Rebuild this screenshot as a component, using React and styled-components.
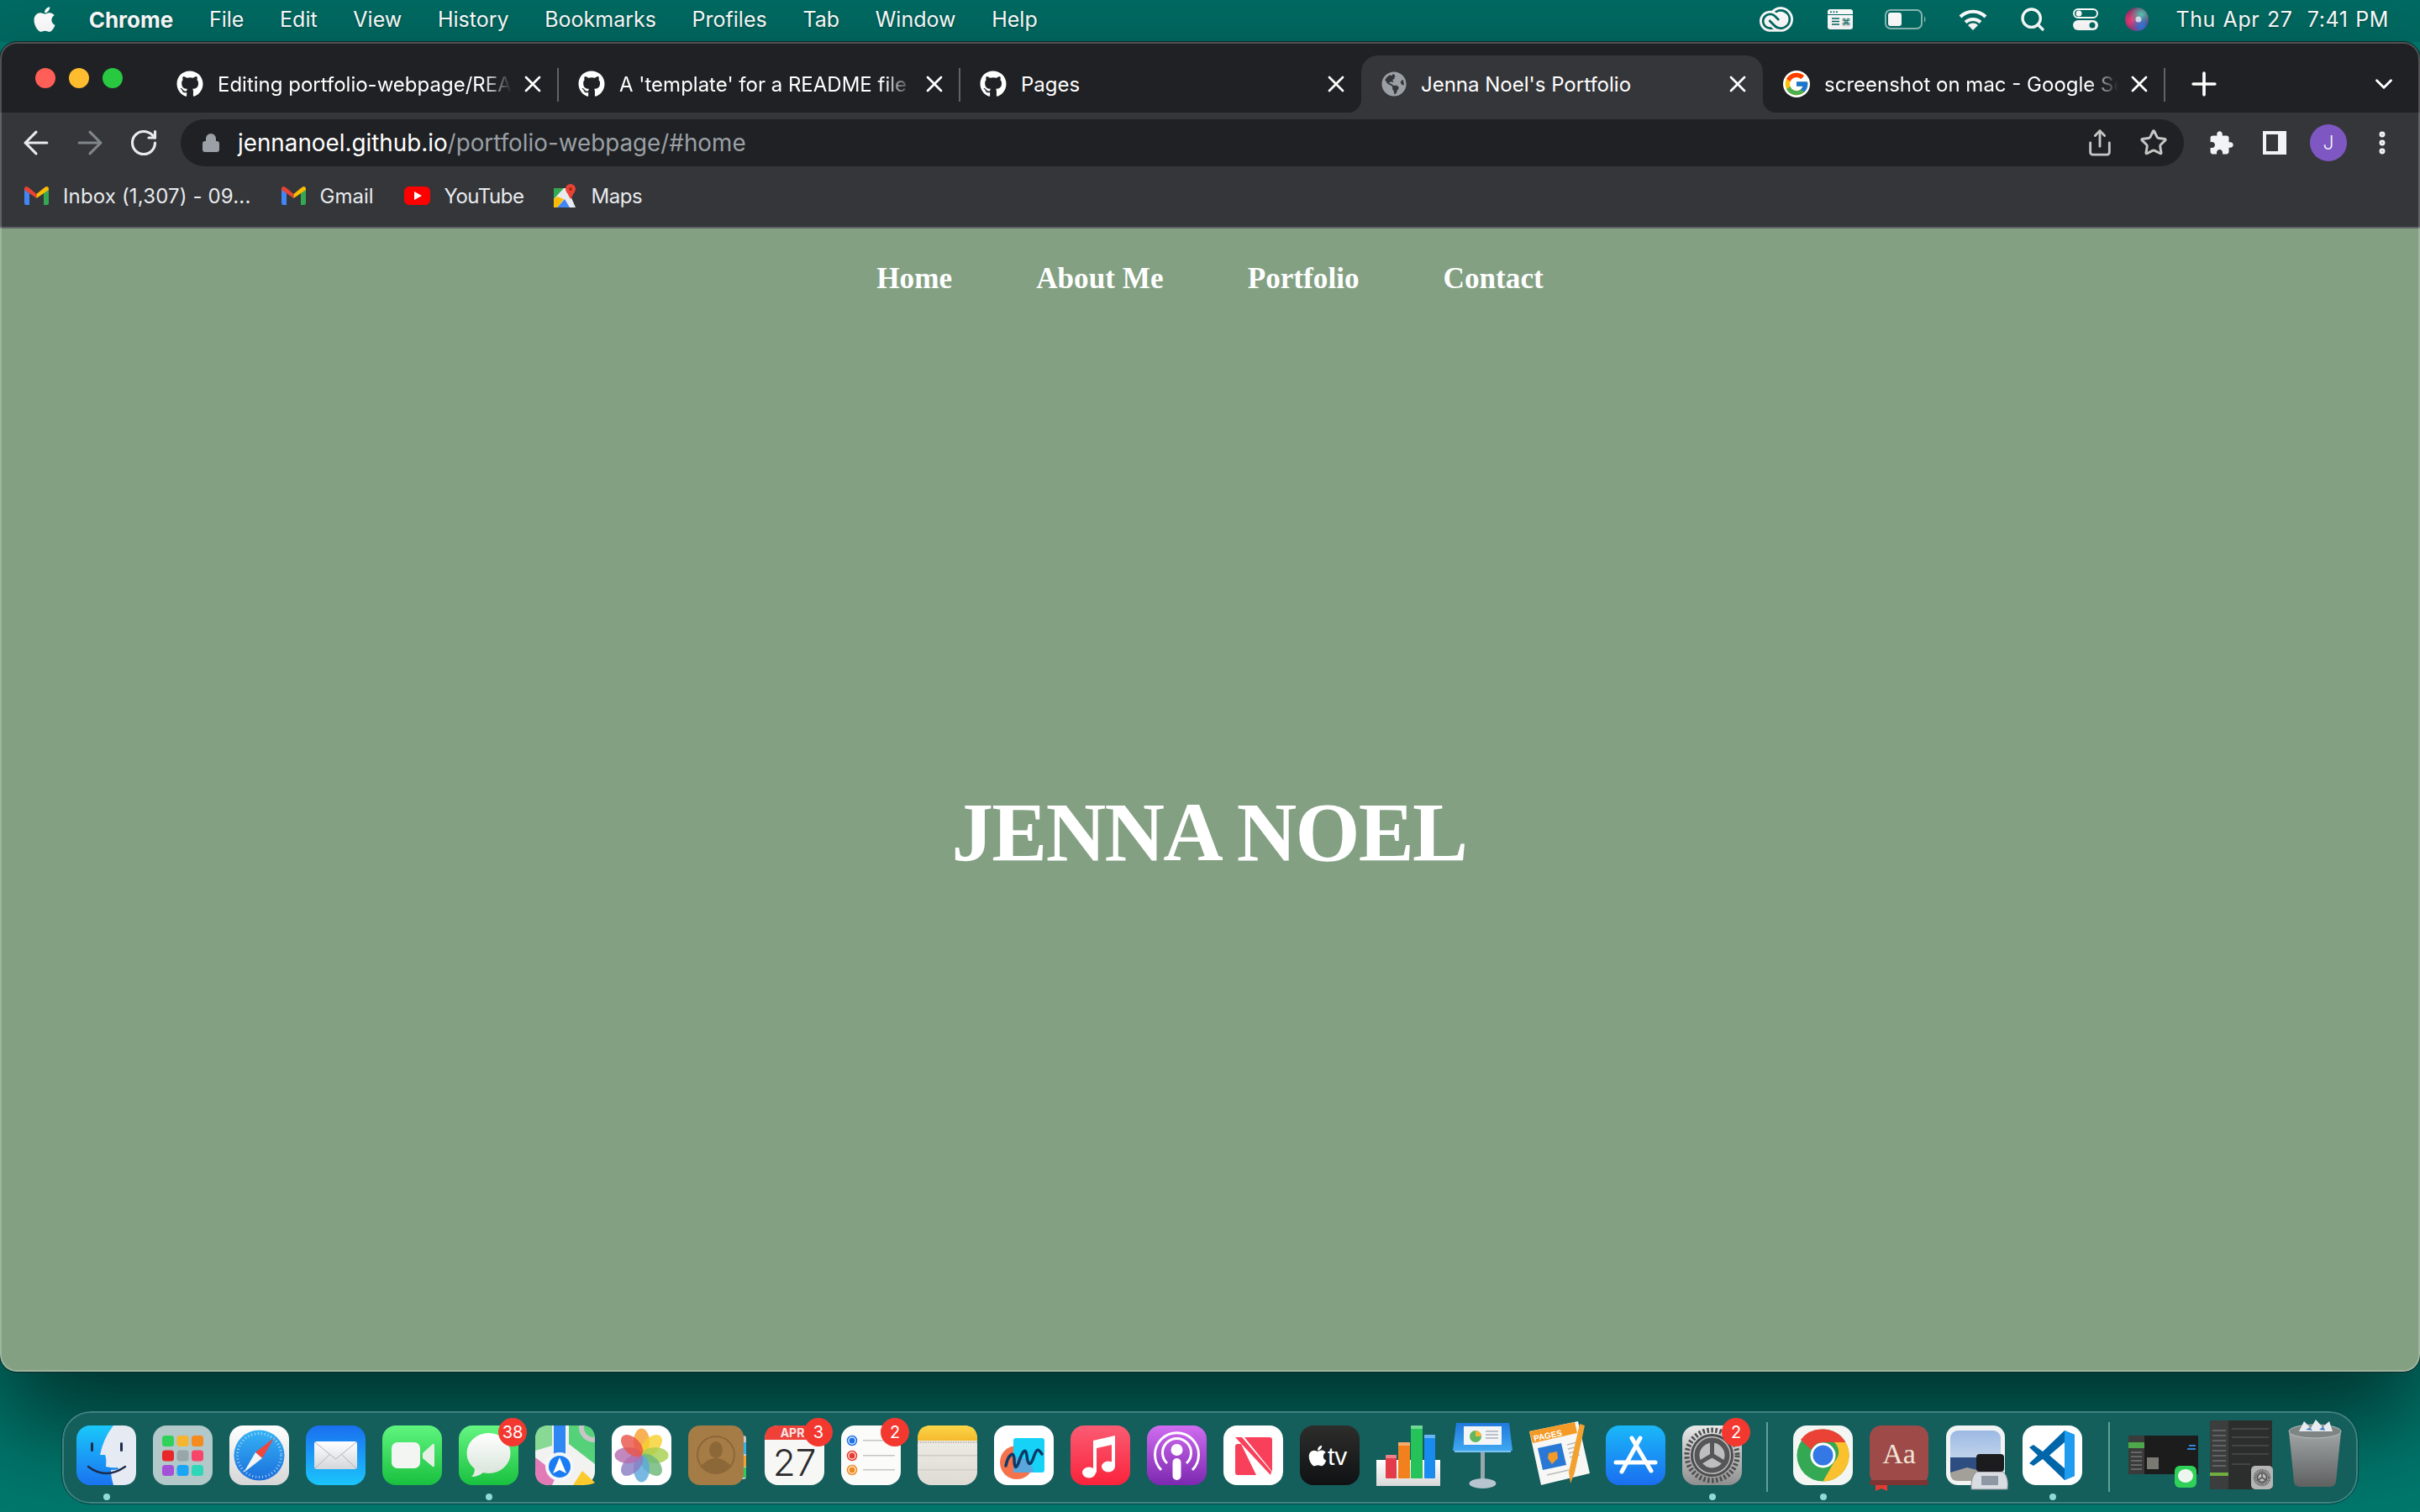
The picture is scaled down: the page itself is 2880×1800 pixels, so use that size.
import React from 'react';
import styled, { createGlobalStyle } from 'styled-components';
import { FaApple, FaGithub, FaGlobeAmericas } from 'react-icons/fa';
import { FcGoogle } from 'react-icons/fc';
import { SiAdobecreativecloud } from 'react-icons/si';
import { ArrowLeft, ArrowRight, RotateCw, Lock, Share, Star, X, Plus, ChevronDown, Search, EllipsisVertical } from 'lucide-react';

const Global = createGlobalStyle`
  html, body { margin: 0; padding: 0; background: #01786d; }
  * { box-sizing: border-box; }
`;

const Desktop = styled.div`
  width: 2880px;
  height: 1800px;
  overflow: hidden;
  display: flex;
  flex-direction: column;
  background: #01786d;
  font-family: Inter, "Liberation Sans", sans-serif;
`;

const MenuBar = styled.div`
  height: 50px;
  flex: none;
  display: flex;
  align-items: center;
  justify-content: space-between;
  padding: 0 37px 4px 40px;
  background: #006a62;
  color: #fff;
  font-size: 25px;
  text-shadow: 0 1px 3px rgba(0, 0, 0, 0.3);
`;

const MenuGroup = styled.div`
  display: flex;
  align-items: center;
  gap: ${(p) => p.$gap}px;
`;

const AppleLogo = styled(FaApple)`
  margin: 0 -7px 0 -4px;
`;

const CloudLogo = styled(SiAdobecreativecloud)`
  margin-right: 3px;
`;

const MenuItem = styled.span`
  font-weight: ${(p) => (p.$bold ? 700 : 400)};
  font-size: ${(p) => (p.$bold ? 26 : 25)}px;
  white-space: nowrap;
`;

const Clock = styled.span`
  white-space: nowrap;
  letter-spacing: 0.6px;
  word-spacing: 1px;
`;

const Browser = styled.div`
  height: 1583px;
  flex: none;
  display: flex;
  flex-direction: column;
  position: relative;
  border-radius: 20px;
  overflow: hidden;
  outline: 1px solid #0a2a29;
  box-shadow: 0 60px 120px rgba(0, 0, 0, 0.6);
  z-index: 1;
  &::after {
    content: '';
    position: absolute;
    inset: 0;
    border-radius: 20px;
    border: 2px solid rgba(255, 255, 255, 0.22);
    pointer-events: none;
  }
`;

const TabStrip = styled.div`
  height: 84px;
  flex: none;
  display: flex;
  align-items: flex-end;
  padding-left: 42px;
  background: #202124;
  color: #fff;
  font-size: 24px;
`;

const Lights = styled.div`
  display: flex;
  gap: 16px;
  margin: 0 40px 29px 0;
`;

const Light = styled.i`
  width: 24px;
  height: 24px;
  border-radius: 50%;
  background: ${(p) => p.$color};
`;

const Tab = styled.div`
  width: 478px;
  height: 68px;
  flex: none;
  display: flex;
  align-items: center;
  gap: 17px;
  padding: 0 14px 0 24px;
  position: relative;
  border-radius: 20px 20px 0 0;
  background: ${(p) => (p.$active ? '#35363a' : 'transparent')};
  ${(p) => p.$sep && `
    &::after {
      content: '';
      position: absolute;
      right: -1px;
      top: 15px;
      height: 40px;
      width: 2px;
      background: #5f6368;
    }
  `}
  ${(p) => p.$active && `
    &::before, &::after {
      content: '';
      position: absolute;
      bottom: 0;
      width: 16px;
      height: 16px;
    }
    &::before {
      left: -16px;
      background: radial-gradient(circle at 0 0, transparent 16px, #35363a 16.5px);
    }
    &::after {
      right: -16px;
      background: radial-gradient(circle at 100% 0, transparent 16px, #35363a 16.5px);
    }
  `}
`;

const TabTitle = styled.span`
  flex: 1;
  min-width: 0;
  margin-right: -8px;
  overflow: hidden;
  white-space: nowrap;
  -webkit-mask-image: ${(p) => (p.$fade ? 'linear-gradient(90deg, #000 90%, transparent 100%)' : 'none')};
`;

const NewTab = styled.div`
  flex: 1;
  height: 68px;
  display: flex;
  align-items: center;
  justify-content: space-between;
  padding: 0 26px 0 25px;
`;

const Toolbar = styled.div`
  height: 72px;
  flex: none;
  display: flex;
  align-items: center;
  padding: 0 0 0 21px;
  background: #35363a;
  color: #e8eaed;
`;

const NavIcons = styled.div`
  display: flex;
  align-items: center;
  gap: 20px;
  margin-right: 22px;
`;

const NavSlot = styled.span`
  width: 44px;
  height: 44px;
  display: flex;
  align-items: center;
  justify-content: center;
`;

const Omnibox = styled.div`
  width: 2384px;
  height: 56px;
  flex: none;
  display: flex;
  align-items: center;
  padding: 0 19px 0 24px;
  border-radius: 28px;
  background: #202124;
  font-size: 27.8px;
  color: #fff;
`;

const Url = styled.span`
  flex: 1;
  margin-left: 20px;
  white-space: nowrap;
  span { color: #9aa0a6; }
`;

const OmniIcons = styled.div`
  display: flex;
  align-items: center;
  gap: 30px;
  color: #c4c7c5;
`;

const ToolIcons = styled.div`
  display: flex;
  align-items: center;
  margin-left: 29px;
  gap: 28px;
  color: #f1f3f4;
`;

const ToolSlot = styled.span`
  display: flex;
  margin-left: ${(p) => p.$ml || 0}px;
`;

const Avatar = styled.div`
  width: 44px;
  height: 44px;
  border-radius: 50%;
  background: #7e57c2;
  display: flex;
  align-items: center;
  justify-content: center;
  font-size: 23px;
  font-weight: 300;
  color: #f1f3f4;
`;

const Bookmarks = styled.div`
  height: 66px;
  flex: none;
  display: flex;
  align-items: center;
  padding: 0 0 10px 29px;
  gap: 36px;
  background: #35363a;
  border-bottom: 2px solid #5f6368;
  color: #e8eaed;
  font-size: 24px;
`;

const Bookmark = styled.div`
  display: flex;
  align-items: center;
  gap: 17px;
  white-space: nowrap;
  letter-spacing: ${(p) => p.$squeeze || 0}px;
`;

const Page = styled.main`
  flex: 1;
  display: flex;
  flex-direction: column;
  background: #83a083;
  color: #fff;
  font-family: "Liberation Serif", "Times New Roman", serif;
  font-weight: 700;
`;

const Nav = styled.nav`
  height: 120px;
  flex: none;
  display: flex;
  justify-content: center;
  align-items: center;
  gap: 100px;
  font-size: 35.2px;
`;

const Hero = styled.section`
  flex: 1;
  display: flex;
  align-items: center;
  justify-content: center;
  padding: 0 2px 44px 0;
`;

const Title = styled.h1`
  margin: 0;
  font-size: 99px;
  line-height: 1;
  font-weight: 700;
  letter-spacing: -1.7px;
`;

const DockArea = styled.div`
  flex: 1;
  display: flex;
  justify-content: center;
  padding-top: 47px;
`;

const Dock = styled.div`
  height: 110px;
  display: flex;
  gap: 20px;
  padding: 15px 16px 0 15px;
  position: relative;
  z-index: 2;
  border-radius: 34px;
  background: #145e5c;
  border: 2px solid #3d8581;
  outline: 1px solid #0b4344;
`;

const Item = styled.div`
  width: ${(p) => p.$w || 71}px;
  height: 72px;
  flex: none;
  position: relative;
  svg { display: block; overflow: visible; }
`;

const Badge = styled.span`
  position: absolute;
  top: -9px;
  right: -10px;
  min-width: 34px;
  height: 34px;
  border-radius: 50%;
  background: #f3392f;
  color: #fff;
  font-size: 20px;
  display: flex;
  align-items: center;
  justify-content: center;
`;

const Dot = styled.i`
  position: absolute;
  left: 50%;
  bottom: -17px;
  width: 8px;
  height: 8px;
  margin-left: -4px;
  border-radius: 50%;
  background: #8ddcd5;
`;

const Separator = styled.div`
  width: 2px;
  height: 83px;
  margin: -4px 10px 0 ${(p) => p.$ml}px;
  flex: none;
  background: #5f9f9a;
`;

const Thumbs = styled.div`
  display: flex;
  gap: 13px;
  margin-left: -8px;
`;

/* small colour marks used in the browser chrome */
const GmailMark = () => (
  <svg width="29" height="22" viewBox="0 0 29 22">
    <path d="M0 3v17q0 2 2 2h4V8z" fill="#4285f4" />
    <path d="M29 3v17q0 2-2 2h-4V8z" fill="#34a853" />
    <path d="M0 3q0-3 3-3l3 2 8.5 7v5L0 4z" fill="#ea4335" />
    <path d="M29 3q0-3-3-3l-3 2-8.5 7v5L29 4z" fill="#fbbc04" />
  </svg>
);

const YoutubeMark = () => (
  <svg width="31" height="22" viewBox="0 0 31 22">
    <rect width="31" height="22" rx="6" fill="#f00" />
    <path d="M12 6l9 5-9 5z" fill="#fff" />
  </svg>
);

const MapsMark = () => (
  <svg width="27" height="28" viewBox="0 0 27 28">
    <path d="M0 5h16l10 23H0z" fill="#e8eaed" />
    <path d="M0 5h12L0 18z" fill="#34a853" />
    <path d="M4 28l9-10 6 10z" fill="#4285f4" />
    <path d="M0 28V18l4-3 8 3-8 10z" fill="#fbbc04" />
    <circle cx="20" cy="6" r="6" fill="#ea4335" />
    <path d="M15 9l5 9 5-9z" fill="#ea4335" />
    <circle cx="20" cy="6" r="2" fill="#a52714" />
  </svg>
);

const ExtensionMark = () => (
  <svg width="31" height="31" viewBox="0 0 24 24" fill="currentColor">
    <path d="M20.5 11H19V7c0-1.1-.9-2-2-2h-4V3.5C13 2.12 11.88 1 10.5 1S8 2.12 8 3.5V5H4c-1.1 0-1.99.9-1.99 2v3.8H3.5c1.49 0 2.7 1.21 2.7 2.7s-1.21 2.7-2.7 2.7H2V20c0 1.1.9 2 2 2h3.8v-1.5c0-1.49 1.21-2.7 2.7-2.7 1.49 0 2.7 1.21 2.7 2.7V22H17c1.1 0 2-.9 2-2v-4h1.5c1.38 0 2.5-1.12 2.5-2.5S21.88 11 20.5 11z" />
  </svg>
);

const BatteryMark = () => (
  <svg width="50" height="24" viewBox="0 0 50 24">
    <rect x="1" y="1" width="43" height="22" rx="6" fill="none" stroke="#fff" strokeOpacity=".55" strokeWidth="2" />
    <rect x="4" y="4" width="16" height="16" rx="3" fill="#fff" />
    <path d="M47 8q3 4 0 8z" fill="#fff" fillOpacity=".55" />
  </svg>
);

const KeyGlyph = styled.text`
  font-family: "DejaVu Sans", sans-serif;
`;

const KeyboardMark = () => (
  <svg width="30" height="24" viewBox="0 0 30 24">
    <rect x="0" y="0" width="30" height="24" rx="3" fill="#fff" />
    <path d="M0 6.5h30" stroke="#006a62" strokeWidth="1" />
    <circle cx="4" cy="3.2" r="1" fill="#006a62" />
    <circle cx="7.5" cy="3.2" r="1" fill="#006a62" />
    <circle cx="11" cy="3.2" r="1" fill="#006a62" />
    <path d="M5 11h9M5 14.5h9M5 18h9" stroke="#006a62" strokeWidth="1.5" />
    <KeyGlyph x="22" y="19" fontSize="11" fill="#006a62" textAnchor="middle">⌘</KeyGlyph>
  </svg>
);

const WifiMark = () => (
  <svg width="34" height="26" viewBox="0 0 34 26">
    <g fill="none" stroke="#fff" strokeWidth="4">
      <path d="M2 10A21 21 0 0 1 32 10" />
      <path d="M8 16.5A13 13 0 0 1 26 16.5" />
    </g>
    <path d="M17 26l-6-6a8.5 8.5 0 0 1 12 0z" fill="#fff" />
  </svg>
);

const ControlMark = () => (
  <svg width="30" height="26" viewBox="0 0 30 26">
    <rect x="1" y="1" width="28" height="10" rx="5" fill="none" stroke="#fff" strokeWidth="2" />
    <circle cx="7" cy="6" r="3.5" fill="#fff" />
    <rect x="0" y="14" width="30" height="12" rx="6" fill="#fff" />
    <circle cx="23" cy="20" r="3.5" fill="#006a62" />
  </svg>
);

const SiriMark = () => (
  <svg width="28" height="28" viewBox="0 0 28 28">
    <defs>
      <radialGradient id="siriA" cx=".3" cy=".55" r=".55">
        <stop offset="0" stopColor="#ff3f7f" />
        <stop offset="1" stopColor="#7c2a5f" />
      </radialGradient>
      <radialGradient id="siriB" cx=".7" cy=".3" r=".5">
        <stop offset="0" stopColor="#4be0c2" stopOpacity=".9" />
        <stop offset="1" stopColor="#4be0c2" stopOpacity="0" />
      </radialGradient>
      <radialGradient id="siriC" cx=".7" cy=".8" r=".5">
        <stop offset="0" stopColor="#2f7fe8" />
        <stop offset="1" stopColor="#2f7fe8" stopOpacity="0" />
      </radialGradient>
    </defs>
    <circle cx="14" cy="14" r="14" fill="url(#siriA)" />
    <circle cx="14" cy="14" r="14" fill="url(#siriB)" />
    <circle cx="14" cy="14" r="14" fill="url(#siriC)" />
    <circle cx="16" cy="14" r="3.5" fill="#f3f7fb" fillOpacity=".8" />
  </svg>
);

const SidePanelMark = () => (
  <svg width="28" height="28" viewBox="0 0 28 28">
    <path fillRule="evenodd" d="M0 0h28v28H0zM4 4v20h14V4z" fill="currentColor" />
  </svg>
);

/* dock icons: each one drawn on a 71x71 tile */
const Tile = ({ children, w = 71, h = 71 }) => (
  <svg width={w} height={h} viewBox={`0 0 ${w} ${h}`}>
    {children}
  </svg>
);

const Grad = ({ id, a, b }) => (
  <linearGradient id={id} x1="0" y1="0" x2="0" y2="1">
    <stop offset="0" stopColor={a} />
    <stop offset="1" stopColor={b} />
  </linearGradient>
);

const Finder = () => (
  <Tile>
    <defs><Grad id="fi" a="#1ac8fb" b="#1a73f0" /></defs>
    <rect width="71" height="71" rx="16" fill="url(#fi)" />
    <path d="M44 0h11q16 0 16 16v39q0 16-16 16H44q-3-10-3-18 6 0 9-1l-1-2q-6 1-14-1 1-10-1-14H28q4-20 16-35z" fill="#e6eaf2" />
    <rect x="17" y="20" width="3" height="11" rx="1.5" fill="#1d2b4c" />
    <rect x="52" y="20" width="3" height="11" rx="1.5" fill="#1d2b4c" />
    <path d="M14 49q21 16 44 0" fill="none" stroke="#1d2b4c" strokeWidth="2.4" strokeLinecap="round" />
  </Tile>
);

const launchColors = ['#2fd158', '#f6b52f', '#f58a1f', '#e8262b', '#98a5a9', '#f7466a', '#a451d8', '#1aa6f5', '#2fd6b8'];

const Launchpad = () => (
  <Tile>
    <rect width="71" height="71" rx="16" fill="#b3c8c8" />
    {launchColors.map((c, i) => (
      <rect key={c} x={11 + (i % 3) * 17.5} y={12 + Math.floor(i / 3) * 17.5} width="14" height="13" rx="3.5" fill={c} />
    ))}
  </Tile>
);

const Safari = () => (
  <Tile>
    <defs><Grad id="sa" a="#ffffff" b="#d6d6d6" /><Grad id="sb" a="#35b3f5" b="#1b6fdc" /></defs>
    <rect width="71" height="71" rx="16" fill="url(#sa)" />
    <circle cx="35.5" cy="35.5" r="30" fill="url(#sb)" />
    <circle cx="35.5" cy="35.5" r="26" fill="none" stroke="#cfeafc" strokeWidth="3" strokeDasharray="1 3" opacity=".8" />
    <path d="M53 15L31 32l8 7z" fill="#f0463c" />
    <path d="M17 56l22-17-8-7z" fill="#f4f4f4" />
  </Tile>
);

const Mail = () => (
  <Tile>
    <defs><Grad id="ma" a="#1a6ff0" b="#1bc5fb" /><Grad id="mb" a="#ffffff" b="#d3d6da" /></defs>
    <rect width="71" height="71" rx="16" fill="url(#ma)" />
    <rect x="10" y="19" width="51" height="33" rx="3" fill="url(#mb)" />
    <path d="M11 20l24.5 20L60 20M11 51l18-17M60 51L42 34" fill="none" stroke="#aeb3bb" strokeWidth="1" />
  </Tile>
);

const FaceTime = () => (
  <Tile>
    <defs><Grad id="ft" a="#5ff57e" b="#19c03f" /></defs>
    <rect width="71" height="71" rx="16" fill="url(#ft)" />
    <rect x="11" y="20" width="34" height="31" rx="7" fill="#f3f5f3" />
    <path d="M48 33l12-11q2-1 2 2v23q0 3-2 2L48 39z" fill="#e4efe6" />
  </Tile>
);

const Messages = () => (
  <Tile>
    <defs><Grad id="ms" a="#65f582" b="#19c13f" /><Grad id="mt" a="#ffffff" b="#d9e5db" /></defs>
    <rect width="71" height="71" rx="16" fill="url(#ms)" />
    <ellipse cx="35.5" cy="33" rx="26" ry="24" fill="url(#mt)" />
    <path d="M19 50q0 8-4 11 9 0 15-6z" fill="#e3ece4" />
  </Tile>
);

const MapsApp = () => (
  <Tile>
    <rect width="71" height="71" rx="16" fill="#f2f2f0" />
    <path d="M40 0h15q16 0 16 16v30L40 22z" fill="#55d17a" />
    <path d="M0 38l26 20-6 13H16Q0 71 0 55z" fill="#e27ab8" />
    <path d="M45 71l11-17 15 14q-4 3-16 3z" fill="#fbcb2d" />
    <path d="M0 16Q0 0 16 0h4v24L0 30z" fill="#88d993" />
    <rect x="22" y="0" width="14" height="34" fill="#2f87f3" />
    <path d="M52 0a18 18 0 0 0 19 20v-6a12 12 0 0 1-13-14z" fill="#c7c5c6" />
    <circle cx="29" cy="49" r="17" fill="#f4f6f8" />
    <circle cx="29" cy="49" r="13" fill="#1a7cf4" />
    <path d="M29 38l8 19-8-4-8 4z" fill="#fff" />
  </Tile>
);

const petals = ['#f7a02e', '#f5d12f', '#a7cf4f', '#6cb77a', '#5ba8dc', '#8a7ec4', '#b46cae', '#e8564b'];

const Photos = () => (
  <Tile>
    <rect width="71" height="71" rx="16" fill="#fff" />
    {petals.map((c, i) => (
      <ellipse key={c} cx="35.5" cy="19.5" rx="9.5" ry="16" fill={c} fillOpacity=".82" transform={`rotate(${i * 45} 35.5 35.5)`} />
    ))}
  </Tile>
);

const Contacts = () => (
  <Tile>
    <rect x="60" y="12" width="9" height="52" rx="3" fill="#c9c9c9" />
    <rect x="62" y="20" width="7" height="14" fill="#3cb1e8" />
    <rect x="62" y="36" width="7" height="13" fill="#f2a12e" />
    <rect x="62" y="50" width="7" height="12" fill="#35c759" />
    <rect width="66" height="71" rx="14" fill="#a67c46" />
    <circle cx="33" cy="35" r="22" fill="none" stroke="#8c6738" strokeWidth="2" />
    <ellipse cx="33" cy="29" rx="8" ry="10" fill="#8c6738" />
    <path d="M15 48q18-18 36 0q-8 9-18 9t-18-9z" fill="#8c6738" />
  </Tile>
);

const SansText = styled.text`
  font-family: Inter, "Liberation Sans", sans-serif;
`;

const Calendar = () => (
  <Tile>
    <rect width="71" height="71" rx="16" fill="#f7f7f5" />
    <path d="M0 17v-1Q0 0 16 0h39q16 0 16 16v1z" fill="#ee4138" />
    <SansText x="33" y="14" fontSize="14" fontWeight="700" fill="#f7e6e4" textAnchor="middle">APR</SansText>
    <SansText x="35.5" y="60" fontSize="44" fontWeight="300" fill="#2b2b2b" textAnchor="middle">27</SansText>
  </Tile>
);

const Reminders = () => (
  <Tile>
    <rect width="71" height="71" rx="16" fill="#fbfbf9" />
    {[['#1a73e8', 18], ['#ea3a30', 36], ['#f08a1d', 53]].map(([c, y]) => (
      <g key={c}>
        <circle cx="13" cy={y} r="5.5" fill="none" stroke={c} strokeWidth="1.5" />
        <circle cx="13" cy={y} r="3.5" fill={c} />
        <rect x="26" y={y - 1} width="38" height="1.5" fill="#c5c5c5" />
      </g>
    ))}
  </Tile>
);

const Notes = () => (
  <Tile>
    <defs><Grad id="no" a="#f1efe9" b="#dedbd4" /><Grad id="nt" a="#fbd748" b="#f5b92c" /></defs>
    <rect width="71" height="71" rx="16" fill="url(#no)" />
    <path d="M0 18v-2Q0 0 16 0h39q16 0 16 16v2z" fill="url(#nt)" />
    <path d="M0 20h71" stroke="#bdbab3" strokeWidth="2" strokeDasharray="1.5 1.5" />
    <rect y="35" width="71" height="1.5" fill="#d1cec8" />
    <rect y="52" width="71" height="1.5" fill="#d1cec8" />
  </Tile>
);

const Freeform = () => (
  <Tile>
    <rect width="71" height="71" rx="16" fill="#fff" />
    <circle cx="27" cy="44" r="20" fill="#f5734c" />
    <rect x="23" y="15" width="37" height="41" rx="3" fill="#17d2f7" />
    <path d="M23 38a20 20 0 0 1 24 18H26q-3 0-3-3z" fill="#5aa5dc" />
    <path d="M14 48c3-14 10-18 10-8s2 14 6 2 8-16 9-6 4 14 8 2 6-10 10-4" fill="none" stroke="#0b3a66" strokeWidth="3.5" strokeLinecap="round" />
  </Tile>
);

const MusicApp = () => (
  <Tile>
    <defs><Grad id="mu" a="#fa5c73" b="#fa233b" /></defs>
    <rect width="71" height="71" rx="16" fill="url(#mu)" />
    <path d="M27 18l26-6v36h-4V23l-18 4v29h-4z" fill="#fff" />
    <ellipse cx="22" cy="56" rx="8" ry="6.5" fill="#fff" />
    <ellipse cx="45" cy="49" rx="8" ry="6.5" fill="#fff" />
  </Tile>
);

const Podcasts = () => (
  <Tile>
    <defs><Grad id="po" a="#d06cf0" b="#7c28b0" /></defs>
    <rect width="71" height="71" rx="16" fill="url(#po)" />
    <g fill="none" stroke="#fff" strokeWidth="3">
      <path d="M17 53a26 26 0 1 1 37 0" />
      <path d="M24 45a17 17 0 1 1 23 0" />
    </g>
    <circle cx="35.5" cy="29" r="7" fill="#fff" />
    <rect x="30.5" y="39" width="10" height="26" rx="5" fill="#fff" />
  </Tile>
);

const News = () => (
  <Tile>
    <rect width="71" height="71" rx="16" fill="#fff" />
    <path d="M14 25q0-3 3-3h4l18 37H17q-3 0-3-3zM25 14h30q3 0 3 3v38z" fill="#f9405a" />
    <path d="M14 14h8l35 41-1 4z" fill="#f9405a" />
  </Tile>
);

const TvText = styled.text`
  font-family: "Liberation Sans", sans-serif;
`;

const TvApp = () => (
  <Tile>
    <defs><Grad id="tv" a="#2d2d2b" b="#0f1113" /></defs>
    <rect width="71" height="71" rx="16" fill="url(#tv)" />
    <foreignObject x="7" y="22" width="28" height="28">
      <FaApple size={28} color="#fff" />
    </foreignObject>
    <TvText x="33" y="47" fontSize="30" fill="#fff">tv</TvText>
  </Tile>
);

const Numbers = () => (
  <Tile w={76} h={74}>
    <defs><Grad id="nu" a="#ffffff" b="#d9d9d9" /></defs>
    <rect x="0" y="41" width="76" height="31" fill="url(#nu)" />
    <rect x="11" y="35" width="13" height="28" rx="1" fill="#e43b4a" />
    <rect x="26" y="20" width="14" height="43" rx="1" fill="#f2801e" />
    <rect x="41" y="0" width="14" height="63" rx="1" fill="#25c35a" />
    <rect x="57" y="11" width="13" height="52" rx="1" fill="#1a8cf0" />
    <path d="M11 39h13v-4H11zM26 24h14v-4H26zM41 4h14V0H41zM57 15h13v-4H57z" fill="#ffffff" fillOpacity=".35" />
  </Tile>
);

const Keynote = () => (
  <Tile h={78}>
    <defs><Grad id="ke" a="#2079dd" b="#3fa8f0" /></defs>
    <g transform="translate(0 -3)">
      <path d="M4 0h63l4 33H0z" fill="url(#ke)" />
      <rect x="2" y="33" width="67" height="2" fill="#7dc4f5" />
      <rect x="13" y="4" width="45" height="22" fill="#f4f5f7" />
      <circle cx="27" cy="16" r="7" fill="#5fb760" />
      <path d="M27 16V9a7 7 0 0 1 7 7z" fill="#f3b83a" />
      <path d="M39 10h15M39 14h15M39 18h15" stroke="#a8b0ba" strokeWidth="1.5" />
      <rect x="33" y="35" width="5" height="33" fill="#9aa6ad" />
      <ellipse cx="35.5" cy="72" rx="16" ry="6" fill="#b7c6ce" />
    </g>
  </Tile>
);

const PageText = styled.text`
  font-family: "Liberation Sans", sans-serif;
  font-weight: 700;
`;

const PagesApp = () => (
  <Tile w={72} h={80}>
    <g transform="translate(0 -5)">
      <path d="M0 12L58 0l14 62-58 14z" fill="#f7f7f5" />
      <path d="M0 12L54 1l3 13-53 12z" fill="#f49a26" />
      <PageText x="6" y="24" fontSize="10" fill="#fff" transform="rotate(-12 6 24)">PAGES</PageText>
      <path d="M10 32l28-6 6 26-28 6z" fill="#2a78d5" />
      <path d="M23 38l10-2 1 8-7 7-5-7z" fill="#f49a26" />
      <path d="M45 28l12-3M46 33l12-3M47 38l12-3M48 43l12-3M21 64l26-6" stroke="#bbb" strokeWidth="1.5" />
      <path d="M60 3l6 2-12 56-5 13-2-14z" fill="#f2a02e" />
    </g>
  </Tile>
);

const AppStore = () => (
  <Tile>
    <defs><Grad id="ap" a="#1ab8f9" b="#1a6ef0" /></defs>
    <rect width="71" height="71" rx="16" fill="url(#ap)" />
    <g stroke="#fff" strokeWidth="5" strokeLinecap="round">
      <path d="M41 15L19 55" />
      <path d="M31 15l23 39" />
      <path d="M12 44h47" />
    </g>
  </Tile>
);

const Gear = ({ size = 71, bg = true }) => (
  <svg width={size} height={size} viewBox="0 0 71 71">
    <defs><Grad id={`se${size}`} a="#e8e9e9" b="#8f8f8f" /></defs>
    {bg && <rect width="71" height="71" rx="16" fill={`url(#se${size})`} />}
    <circle cx="35.5" cy="35.5" r="30" fill="none" stroke="#4e4e50" strokeWidth="6" strokeDasharray="2.5 2.5" />
    <circle cx="35.5" cy="35.5" r="24" fill="#bebebe" stroke="#4e4e50" strokeWidth="3" />
    <circle cx="35.5" cy="35.5" r="18" fill="none" stroke="#565658" strokeWidth="6" />
    <path d="M35.5 35.5V16M35.5 35.5L18 46M35.5 35.5L53 46" stroke="#565658" strokeWidth="5" />
  </svg>
);

const ChromeApp = () => (
  <Tile>
    <rect width="71" height="71" rx="16" fill="#f3f6f2" />
    <circle cx="35.5" cy="35.5" r="31" fill="#34a853" />
    <path d="M35.5 4.5a31 31 0 0 1 27 15.5H35.5a15.5 15.5 0 0 0-14 9L9 17a31 31 0 0 1 26.5-12.5z" fill="#ea4335" />
    <path d="M62.5 20a31 31 0 0 1-27 46.5L49 43a15.5 15.5 0 0 0 0-23z" fill="#fbc02d" />
    <circle cx="35.5" cy="35.5" r="15" fill="#fff" />
    <circle cx="35.5" cy="35.5" r="12" fill="#3478e5" />
  </Tile>
);

const AaText = styled.text`
  font-family: "Liberation Serif", serif;
`;

const Dictionary = () => (
  <Tile h={78}>
    <path d="M7 68h14v10l-7-3-7 3z" fill="#e23b32" />
    <rect width="70" height="71" rx="14" fill="#9e4a48" />
    <rect y="65" width="70" height="6" rx="3" fill="#7d3432" />
    <AaText x="35" y="45" fontSize="34" fill="#f1e4d6" textAnchor="middle">Aa</AaText>
  </Tile>
);

const Preview = () => (
  <Tile w={74} h={76}>
    <defs><Grad id="pr" a="#9cb9e4" b="#dfe8f0" /></defs>
    <rect width="70" height="71" rx="14" fill="#f2f3f3" />
    <rect x="5" y="6" width="60" height="60" rx="9" fill="url(#pr)" />
    <rect x="5" y="38" width="60" height="18" fill="#2e4d80" />
    <path d="M5 56l20-6 24 6v10H14q-9 0-9-9z" fill="#a3a09a" />
    <path d="M30 76q-1-14 6-21h32q7 7 5 21z" fill="#d9dce0" stroke="#8a8f95" />
    <rect x="36" y="34" width="33" height="21" rx="4" fill="#1c1c1e" />
    <rect x="42" y="60" width="20" height="11" fill="#8e98a4" />
  </Tile>
);

const VsCode = () => (
  <Tile>
    <rect width="71" height="71" rx="16" fill="#fff" />
    <path d="M50 6L24 31 13 23l-5 3 10 9.5L8 45l5 3 11-8 26 25 12-5V11z" fill="#0065a9" />
    <path d="M50 6l12 5v49l-12 5z" fill="#1f9cf0" />
    <path d="M50 20L32 35.5 50 51z" fill="#fff" />
  </Tile>
);

const MessagesThumb = () => (
  <Tile w={84} h={76}>
    <rect y="12" width="83" height="46" fill="#1c1c1c" />
    <rect y="12" width="19" height="46" fill="#3a3b3b" />
    <rect y="20" width="19" height="7" fill="#4ea84a" />
    <path d="M3 32h13M3 37h13M3 42h13M3 47h13M3 52h13" stroke="#777" strokeWidth="1.5" />
    <rect x="22" y="38" width="14" height="14" fill="#7a7a72" />
    <path d="M72 24h8M70 28h10" stroke="#2d86d8" strokeWidth="2" />
    <rect x="55" y="48" width="26" height="26" rx="6" fill="#2fd158" />
    <ellipse cx="68" cy="60" rx="9" ry="8" fill="#eef5ee" />
  </Tile>
);

const SettingsThumb = () => (
  <Tile w={74} h={78}>
    <g transform="translate(0 -6)">
      <rect width="74" height="82" fill="#2c2e2e" />
      <rect width="22" height="82" fill="#3c3e3e" />
      <rect y="62" width="22" height="4" fill="#6fae3f" />
      <path d="M3 12h16M3 18h16M3 24h16M3 30h16M3 36h16M3 42h16M3 48h16M3 54h16" stroke="#6d6f6f" strokeWidth="1.5" />
      <path d="M26 10h44M26 20h44M26 30h44M26 40h44M26 52h22" stroke="#5a5c5c" strokeWidth="1" />
      <g transform="translate(49 54)">
        <rect width="26" height="28" rx="5" fill="#b5b5b5" />
        <g transform="translate(2 3)"><Gear size={22} bg={false} /></g>
      </g>
    </g>
  </Tile>
);

const Trash = () => (
  <Tile w={64} h={76}>
    <defs><Grad id="tr" a="#a1a5a5" b="#5f6161" /></defs>
    <g transform="translate(0 -7)">
      <path d="M0 14h62l-6 60q-1 6-8 6H14q-7 0-8-6z" fill="url(#tr)" />
      <ellipse cx="31" cy="14" rx="31" ry="8" fill="#7f8585" stroke="#b7bcbc" />
      <path d="M12 14l6-12 8 8 6-10 8 9 8-7 4 12z" fill="#e8ecee" />
      <path d="M20 12l5-3 3 4zM36 12l5-4 2 5z" fill="#4f87c2" />
    </g>
  </Tile>
);

const menus = ['File', 'Edit', 'View', 'History', 'Bookmarks', 'Profiles', 'Tab', 'Window', 'Help'];

const tabs = [
  { title: 'Editing portfolio-webpage/README.md', icon: <FaGithub size={32} />, fade: true, sep: true },
  { title: "A 'template' for a README file to use", icon: <FaGithub size={32} />, fade: true, sep: true },
  { title: 'Pages', icon: <FaGithub size={32} /> },
  { title: "Jenna Noel's Portfolio", icon: <FaGlobeAmericas size={30} color="#9aa0a6" />, active: true },
  { title: 'screenshot on mac - Google Search', icon: <FcGoogle size={32} style={{ background: '#fff', borderRadius: '50%' }} />, fade: true, sep: true },
];

export default function App() {
  return (
    <Desktop>
      <Global />
      <MenuBar>
        <MenuGroup $gap={42.7}>
          <AppleLogo size={34} />
          <MenuItem $bold>Chrome</MenuItem>
          {menus.map((m) => <MenuItem key={m}>{m}</MenuItem>)}
        </MenuGroup>
        <MenuGroup $gap={32}>
          <MenuGroup $gap={38}>
            <CloudLogo size={40} />
            <KeyboardMark />
            <BatteryMark />
            <WifiMark />
            <Search size={32} strokeWidth={2.5} />
          </MenuGroup>
          <ControlMark />
          <SiriMark />
          <Clock>Thu Apr 27&nbsp;&nbsp;7:41 PM</Clock>
        </MenuGroup>
      </MenuBar>

      <Browser>
        <TabStrip>
          <Lights>
            <Light $color="#ff5f57" />
            <Light $color="#febc2e" />
            <Light $color="#28c840" />
          </Lights>
          {tabs.map((t) => (
            <Tab key={t.title} $active={t.active} $sep={t.sep}>
              {t.icon}
              <TabTitle $fade={t.fade}>{t.title}</TabTitle>
              <X size={32} strokeWidth={2} />
            </Tab>
          ))}
          <NewTab>
            <Plus size={44} strokeWidth={2} />
            <ChevronDown size={34} strokeWidth={2} />
          </NewTab>
        </TabStrip>

        <Toolbar>
          <NavIcons>
            <NavSlot><ArrowLeft size={44} strokeWidth={1.7} /></NavSlot>
            <NavSlot><ArrowRight size={44} strokeWidth={1.7} color="#80868b" /></NavSlot>
            <NavSlot><RotateCw size={36} strokeWidth={2.1} /></NavSlot>
          </NavIcons>
          <Omnibox>
            <Lock size={24} fill="#9aa0a6" color="#9aa0a6" />
            <Url>jennanoel.github.io<span>/portfolio-webpage/#home</span></Url>
            <OmniIcons>
              <Share size={34} strokeWidth={2} />
              <Star size={34} strokeWidth={2.1} />
            </OmniIcons>
          </Omnibox>
          <ToolIcons>
            <ExtensionMark />
            <ToolSlot $ml={6}><SidePanelMark /></ToolSlot>
            <Avatar>J</Avatar>
            <ToolSlot $ml={-3}><EllipsisVertical size={34} strokeWidth={2.9} /></ToolSlot>
          </ToolIcons>
        </Toolbar>

        <Bookmarks>
          <Bookmark $squeeze={0.15}><GmailMark />Inbox (1,307) - 09...</Bookmark>
          <Bookmark><GmailMark />Gmail</Bookmark>
          <Bookmark $squeeze={-0.5}><YoutubeMark />YouTube</Bookmark>
          <Bookmark $squeeze={-0.4}><MapsMark />Maps</Bookmark>
        </Bookmarks>

        <Page>
          <Nav>
            <span>Home</span>
            <span>About Me</span>
            <span>Portfolio</span>
            <span>Contact</span>
          </Nav>
          <Hero>
            <Title>JENNA NOEL</Title>
          </Hero>
        </Page>
      </Browser>

      <DockArea>
        <Dock>
          <Item><Finder /><Dot /></Item>
          <Item><Launchpad /></Item>
          <Item><Safari /></Item>
          <Item><Mail /></Item>
          <Item><FaceTime /></Item>
          <Item><Messages /><Badge>38</Badge><Dot /></Item>
          <Item><MapsApp /></Item>
          <Item><Photos /></Item>
          <Item><Contacts /></Item>
          <Item><Calendar /><Badge>3</Badge></Item>
          <Item><Reminders /><Badge>2</Badge></Item>
          <Item><Notes /></Item>
          <Item><Freeform /></Item>
          <Item><MusicApp /></Item>
          <Item><Podcasts /></Item>
          <Item><News /></Item>
          <Item><TvApp /></Item>
          <Item><Numbers /></Item>
          <Item><Keynote /></Item>
          <Item><PagesApp /></Item>
          <Item><AppStore /></Item>
          <Item><Gear /><Badge>2</Badge><Dot /></Item>
          <Separator $ml={9} />
          <Item><ChromeApp /><Dot /></Item>
          <Item><Dictionary /></Item>
          <Item><Preview /></Item>
          <Item><VsCode /><Dot /></Item>
          <Separator $ml={11} />
          <Thumbs>
            <Item $w={84}><MessagesThumb /></Item>
            <Item $w={74}><SettingsThumb /></Item>
          </Thumbs>
          <Item $w={64}><Trash /></Item>
        </Dock>
      </DockArea>
    </Desktop>
  );
}
